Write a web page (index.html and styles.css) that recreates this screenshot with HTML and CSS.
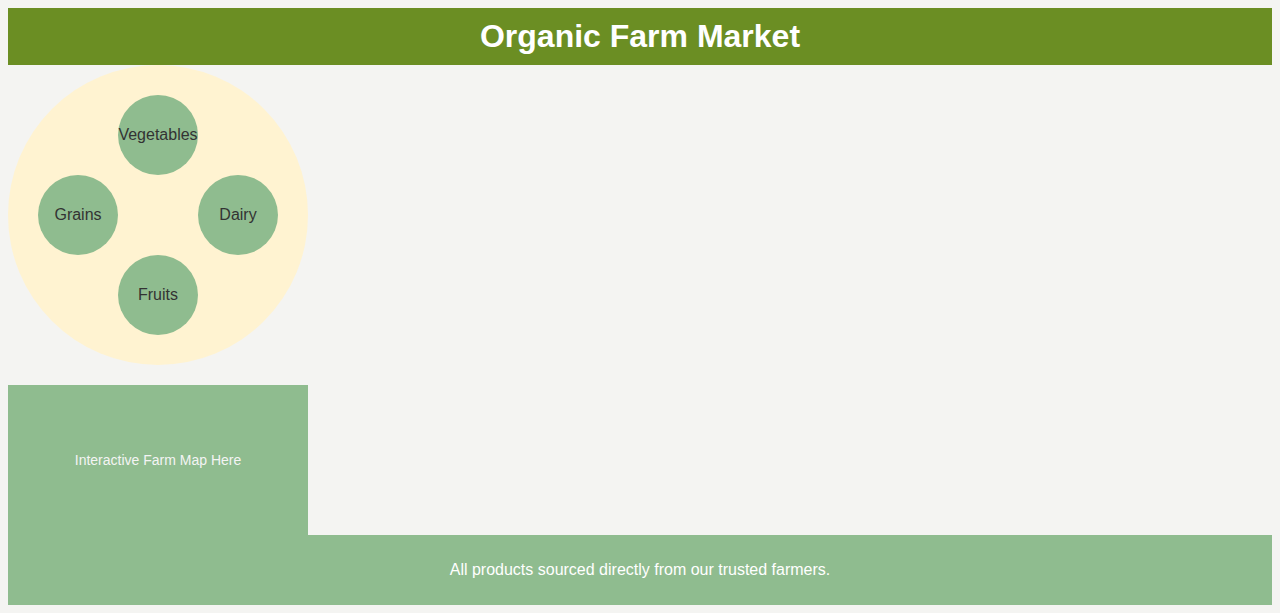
FILE: index.html
```html
<!DOCTYPE html>
<html>
<head>
<meta charset="utf-8">
<title>Organic Farm Market</title>
<link rel="stylesheet" href="styles.css">
</head>
<body>
<header class="header"><h1 class="title">Organic Farm Market</h1></header>
<main class="main">
  <div class="wheel">
    <div class="node node-top">Vegetables</div>
    <div class="node node-left">Grains</div>
    <div class="node node-right">Dairy</div>
    <div class="node node-bottom">Fruits</div>
  </div>
  <div class="map">Interactive Farm Map Here</div>
</main>
<footer class="footer">All products sourced directly from our trusted farmers.</footer>
</body>
</html>
```
FILE: styles.css
```css
html, body { margin: 0; padding: 0; }
body {
  margin: 8px;
  background: #f4f4f2;
  font-family: "Liberation Sans", Arial, sans-serif;
}
.header {
  background: #6b8e23;
  height: 57px;
  display: flex;
  align-items: center;
  justify-content: center;
}
.title {
  margin: 0;
  color: #fff;
  font-size: 32px;
  font-weight: bold;
  line-height: 37px;
}
.main {
  display: flex;
  flex-direction: column;
  gap: 20px;
}
.wheel {
  position: relative;
  width: 300px;
  height: 300px;
  border-radius: 50%;
  background: #fff3d1;
}
.node {
  position: absolute;
  width: 80px;
  height: 80px;
  border-radius: 50%;
  background: #8fbc8f;
  color: #333;
  font-size: 16px;
  display: flex;
  align-items: center;
  justify-content: center;
}
.node-top { left: 110px; top: 30px; }
.node-left { left: 30px; top: 110px; }
.node-right { left: 190px; top: 110px; }
.node-bottom { left: 110px; top: 190px; }
.map {
  width: 300px;
  height: 150px;
  background: #8fbc8f;
  color: #f4f4f4;
  font-size: 14px;
  display: flex;
  align-items: center;
  justify-content: center;
}
.footer {
  background: #8fbc8f;
  color: #fff;
  height: 70px;
  font-size: 16px;
  display: flex;
  align-items: center;
  justify-content: center;
}
```
